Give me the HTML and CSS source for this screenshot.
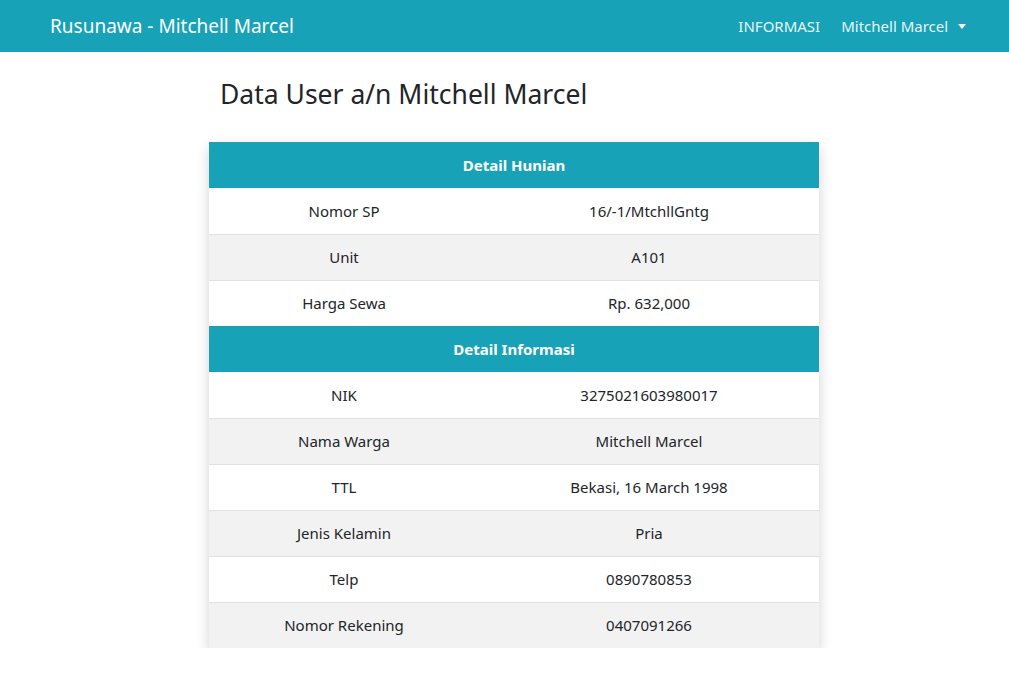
FILE: index.html
```html
<!DOCTYPE html>
<html lang="id">
<head>
<meta charset="utf-8">
<title>Rusunawa - Mitchell Marcel</title>
<link rel="stylesheet" href="styles.css">
</head>
<body>
<nav class="navbar">
  <a class="brand" href="#">Rusunawa - Mitchell Marcel</a>
  <div class="nav-right">
    <a class="nav-link" href="#">INFORMASI</a>
    <a class="nav-link dropdown" href="#">Mitchell Marcel <span class="caret"></span></a>
  </div>
</nav>
<main class="main">
  <h3 class="title">Data User a/n Mitchell Marcel</h3>
  <table class="data">
    <tbody>
      <tr class="head"><th colspan="2">Detail Hunian</th></tr>
      <tr><td>Nomor SP</td><td>16/-1/MtchllGntg</td></tr>
      <tr class="alt"><td>Unit</td><td>A101</td></tr>
      <tr><td>Harga Sewa</td><td>Rp. 632,000</td></tr>
      <tr class="head"><th colspan="2">Detail Informasi</th></tr>
      <tr><td>NIK</td><td>3275021603980017</td></tr>
      <tr class="alt"><td>Nama Warga</td><td>Mitchell Marcel</td></tr>
      <tr><td>TTL</td><td>Bekasi, 16 March 1998</td></tr>
      <tr class="alt"><td>Jenis Kelamin</td><td>Pria</td></tr>
      <tr><td>Telp</td><td>0890780853</td></tr>
      <tr class="alt"><td>Nomor Rekening</td><td>0407091266</td></tr>
    </tbody>
  </table>
</main>
</body>
</html>
```
FILE: styles.css
```css
html, body { margin: 0; padding: 0; }
body {
  font-family: "Noto Sans", "Open Sans", sans-serif;
  color: #212529;
  background: #fff;
  font-size: 15px;
}
.navbar {
  height: 52px;
  background: #17a2b8;
  display: flex;
  align-items: center;
  justify-content: space-between;
  padding: 0 43px 0 50px;
  box-sizing: border-box;
}
.brand {
  color: #fff;
  text-decoration: none;
  font-size: 19px;
}
.nav-right { display: flex; gap: 21px; align-items: center; }
.nav-link {
  color: rgba(255,255,255,0.92);
  text-decoration: none;
  font-size: 15px;
}
.caret {
  display: inline-block;
  width: 0; height: 0;
  border-left: 4.5px solid transparent;
  border-right: 4.5px solid transparent;
  border-top: 5px solid #fff;
  vertical-align: 3px;
  margin-left: 6px;
}
.main {
  width: 610px;
  margin-left: 209px;
}
.title {
  font-weight: 400;
  font-size: 26.5px;
  margin: 24px 0 30px 11px;
  line-height: 36px;
}
.data {
  width: 610px;
  border-collapse: collapse;
  box-shadow: 0 5px 12px rgba(0,0,0,0.18);
}
.data td, .data th {
  height: 46px;
  padding: 0 12px;
  text-align: center;
  vertical-align: middle;
  box-sizing: border-box;
  border-top: 1px solid #dee2e6;
}
.data td:first-child { width: 270px; }
.data .head th {
  background: #17a2b8;
  color: #fff;
  font-weight: 700;
  border-top: none;
}
.data .head + tr td { border-top: none; }
.data .alt td { background: #f2f2f2; }
```
